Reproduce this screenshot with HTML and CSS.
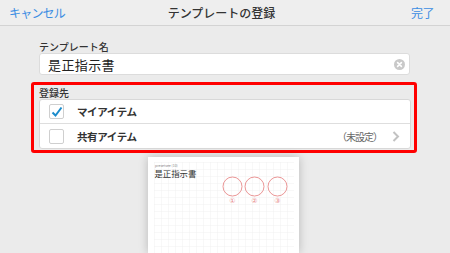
FILE: index.html
```html
<!DOCTYPE html>
<html>
<head>
	<meta charset="utf-8">
	<meta name="viewport" content="width=device-width, initial-scale=1">
	<title>テンプレートの登録</title>
	<link rel="stylesheet" href="styles.css">
</head>
<body>

<header class="navbar">
	<a href="#" class="navBtn navLeft">キャンセル</a>
	<h1 class="navTitle">テンプレートの登録</h1>
	<a href="#" class="navBtn navRight">完了</a>
</header>

<main class="content">

	<section class="fieldC">
		<label class="lblC">テンプレート名</label>
		<div class="inputC">
			<span class="inputTxt">是正指示書</span>
			<svg class="clearIco" width="11" height="11" viewBox="0 0 11 11">
				<circle cx="5.5" cy="5.5" r="5.5" fill="#c9c9c9"/>
				<path d="M3.6 3.6 L7.4 7.4 M7.4 3.6 L3.6 7.4" stroke="#fff" stroke-width="1.6" stroke-linecap="round"/>
			</svg>
		</div>
	</section>

	<section class="destC">
		<label class="lblC">登録先</label>
		<ul class="listC">
			<li class="rowC">
				<span class="chk">
					<svg width="12" height="12" viewBox="0 0 12 12"><path d="M1.5 6.5 L4.5 9.5 L10.5 1.5" fill="none" stroke="#1b8ccc" stroke-width="2"/></svg>
				</span>
				<span class="rowTxt">マイアイテム</span>
			</li>
			<li class="rowC">
				<span class="chk"></span>
				<span class="rowTxt">共有アイテム</span>
				<span class="rowNote">（未設定）</span>
				<svg class="chev" width="8" height="11" viewBox="0 0 8 11"><path d="M1.5 1 L6 5.5 L1.5 10" fill="none" stroke="#c2c2c2" stroke-width="2"/></svg>
			</li>
		</ul>
	</section>

	<div class="preview">
		<svg width="151" height="96" viewBox="0 0 151 96">
			<defs>
				<pattern id="grd" x="6" y="5" width="7" height="7" patternUnits="userSpaceOnUse">
					<path d="M7 0 L0 0 L0 7" fill="none" stroke="#eeeeee" stroke-width="0.8"/>
				</pattern>
			</defs>
			<rect x="6" y="5" width="140" height="91" fill="url(#grd)"/>
			<text x="7" y="9.5" font-size="3.5" fill="#888">presetsee (10)</text>
			<text x="6.5" y="20" font-size="8.4" fill="#333">是正指示書</text>
			<g fill="none" stroke="#e88a8a" stroke-width="0.9">
				<circle cx="84.5" cy="29.5" r="9.5"/>
				<circle cx="106.5" cy="29.5" r="9.5"/>
				<circle cx="129.5" cy="29.5" r="9.5"/>
			</g>
			<g font-size="7" fill="#e88a8a" text-anchor="middle" font-family="DejaVu Sans, sans-serif">
				<text x="84.5" y="46">①</text>
				<text x="106.5" y="46">②</text>
				<text x="129.5" y="46">③</text>
			</g>
		</svg>
	</div>

</main>

</body>
</html>
```

FILE: styles.css
```css
*,*:after,*:before{border: 0;margin: 0;padding: 0;box-sizing: border-box;}
html, body{height: 253px; overflow: hidden;}
body{
	background-color: #ebebeb;
	font-family: "Noto Sans CJK JP", "Noto Sans", sans-serif;
	color: #333;
}

.navbar{
	display: grid;
	grid-template-columns: 1fr auto 1fr;
	align-items: center;
	height: 26px;
	padding: 0 16px 0 9px;
	background-color: #eeeeee;
	border-bottom: 1px solid #d3d3d3;
}
.navBtn{
	color: #3b8de3;
	text-decoration: none;
	font-size: 12px;
	line-height: 25px;
}
.navLeft{justify-self: start; letter-spacing: -0.8px;}
.navRight{justify-self: end; letter-spacing: -0.5px;}
.navTitle{
	font-size: 12px;
	font-weight: 500;
	color: #333;
	line-height: 25px;
}

.content{
	display: flex;
	flex-direction: column;
	padding: 14px 40px 0 39px;
}

.lblC{
	display: block;
	font-size: 10px;
	line-height: 13px;
	color: #333;
	font-weight: 500;
}

.inputC{
	display: flex;
	align-items: center;
	height: 22px;
	padding: 0 4px 0 8px;
	background: #fff;
	border: 1px solid #dcdcdc;
	border-radius: 3px;
}
.inputTxt{flex: 1; font-size: 13px; color: #222; letter-spacing: 0.4px;}
.clearIco{display: block;}

.destC{
	margin: 7px -7px 0 -8px;
	padding: 1px 3px 1px 5px;
	border: 3px solid #ff0000;
	border-radius: 3px;
}
.listC{
	list-style: none;
	background: #fff;
	border: 1px solid #d8d8d8;
	border-radius: 3px;
}
.rowC{
	display: flex;
	align-items: center;
	height: 23px;
	padding: 0 10px 0 9px;
}
.rowC + .rowC{border-top: 1px solid #dedede; height: 25px;}
.chk{
	display: flex;
	align-items: center;
	justify-content: center;
	width: 15px;
	height: 15px;
	border: 1px solid #cfcfcf;
	border-radius: 2px;
	background: #fff;
}
.rowTxt{
	flex: 1;
	margin-left: 13px;
	font-size: 10.5px;
	font-weight: bold;
	color: #333;
	letter-spacing: -0.4px;
}
.rowNote{
	font-size: 10px;
	color: #666;
	letter-spacing: -1px;
	margin-right: 10px;
}
.chev{display: block;}

.preview{
	align-self: center;
	width: 151px;
	height: 96px;
	margin-top: 4px;
	margin-left: -2px;
	background: #fff;
	box-shadow: 0 0 9px rgba(0, 0, 0, 0.22);
}
.preview svg{display: block;}
```
